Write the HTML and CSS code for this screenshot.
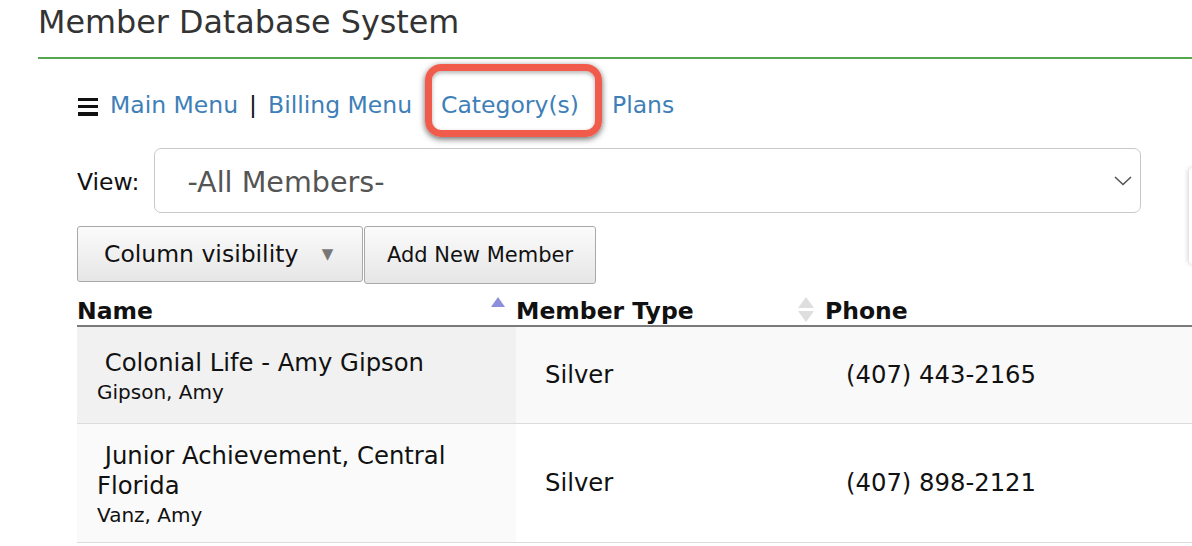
FILE: index.html
```html
<!DOCTYPE html>
<html>
<head>
<meta charset="utf-8">
<title>Member Database System</title>
<link rel="stylesheet" href="styles.css">
</head>
<body>
<header class="page-header">
  <h1 class="title">Member Database System</h1>
</header>
<main class="content">
  <nav class="nav">
    <span class="burger"><i></i><i></i><i></i></span>
    <a class="nav-link" href="#">Main Menu</a>
    <span class="sep">|</span>
    <a class="nav-link" href="#">Billing Menu</a>
    <a class="nav-link nav-highlight" href="#">Category(s)</a>
    <a class="nav-link" href="#">Plans</a>
  </nav>

  <div class="view-row">
    <span class="view-label">View:</span>
    <div class="select">
      <span class="select-text">-All Members-</span>
      <svg class="chevron" width="18" height="10" viewBox="0 0 18 10"><path d="M1 1 L9 8.5 L17 1" fill="none" stroke="#555" stroke-width="1.6"/></svg>
    </div>
  </div>

  <div class="btn-row">
    <button class="btn btn-colvis">Column visibility <span class="caret">▼</span></button>
    <button class="btn btn-add">Add New Member</button>
  </div>

  <table class="members">
    <thead>
      <tr>
        <th class="col-name sort-asc">Name</th>
        <th class="col-type sort-both">Member Type</th>
        <th class="col-phone">Phone</th>
      </tr>
    </thead>
    <tbody>
      <tr class="odd">
        <td class="cell-name"><div class="org">&nbsp;Colonial Life - Amy Gipson</div><div class="person">Gipson, Amy</div></td>
        <td class="cell-type">Silver</td>
        <td class="cell-phone">(407) 443-2165</td>
      </tr>
      <tr class="even">
        <td class="cell-name"><div class="org">&nbsp;Junior Achievement, Central Florida</div><div class="person">Vanz, Amy</div></td>
        <td class="cell-type">Silver</td>
        <td class="cell-phone">(407) 898-2121</td>
      </tr>
    </tbody>
  </table>
</main>
<div class="edge-panel"></div>
</body>
</html>
```
FILE: styles.css
```css
html, body {
  margin: 0;
  padding: 0;
  overflow: hidden;
  background: #fff;
}
body {
  font-family: "DejaVu Sans", Verdana, sans-serif;
  color: #111;
  width: 1192px;
  height: 546px;
  position: relative;
}
.page-header {
  margin-left: 38px;
  padding-top: 3px;
  padding-bottom: 16px;
  border-bottom: 2px solid #55a84e;
}
.title {
  margin: 0;
  font-size: 31.8px;
  line-height: 38px;
  font-weight: normal;
  color: #333;
}
.content {
  margin-left: 77px;
}
.nav {
  display: flex;
  align-items: center;
  margin-top: 32px;
  height: 28px;
  font-size: 23.5px;
  line-height: 28px;
}
.burger {
  display: flex;
  flex-direction: column;
  justify-content: space-between;
  width: 20px;
  height: 18px;
  margin-left: 1px;
  margin-right: 12px;
  margin-top: 3px;
}
.burger i {
  display: block;
  height: 3.5px;
  background: #111;
}
.nav-link {
  color: #3f7fb8;
  text-decoration: none;
  margin-right: 29px;
}
.nav-link:first-of-type {
  margin-right: 0;
}
.sep {
  margin: 0 11px 0 11px;
  color: #111;
}
.nav-highlight {
  position: relative;
  margin-right: 33px;
}
.nav-highlight::after {
  content: "";
  position: absolute;
  left: -16px;
  right: -23px;
  top: -27px;
  bottom: -18px;
  border: 7px solid #f05b4b;
  border-radius: 16px;
  box-shadow: 0 2px 6px rgba(0, 0, 0, 0.6), inset 0 2px 4px rgba(0, 0, 0, 0.3);
}
.view-row {
  display: flex;
  align-items: center;
  margin-top: 29px;
}
.view-label {
  font-size: 23.5px;
  margin-right: 15px;
  margin-top: 2px;
}
.select {
  display: flex;
  align-items: center;
  justify-content: space-between;
  width: 987px;
  height: 65px;
  box-sizing: border-box;
  border: 1.5px solid #c9c9c9;
  border-radius: 7px;
  padding: 0 8px 0 32px;
}
.select-text {
  font-size: 28.6px;
  color: #555;
  margin-top: 3px;
}
.chevron {
  display: block;
}
.btn-row {
  display: flex;
  margin-top: 13px;
  height: 57px;
}
.btn {
  font-family: "DejaVu Sans", Verdana, sans-serif;
  color: #111;
  background: linear-gradient(#fbfbfb, #e6e6e6);
  border: 1px solid #a9a9a9;
  border-radius: 3px;
  box-sizing: border-box;
  margin: 0;
}
.btn-colvis {
  font-size: 23.5px;
  width: 286px;
  height: 56px;
  padding: 0 0 0 26px;
  text-align: left;
  margin-right: 1px;
}
.caret {
  font-size: 15px;
  color: #777;
  margin-left: 16px;
  vertical-align: 3px;
}
.btn-add {
  font-size: 21px;
  width: 232px;
  height: 58px;
  padding: 0;
}
.members {
  width: 1115px;
  border-collapse: collapse;
  margin-top: 14px;
  table-layout: fixed;
}
.members th {
  font-size: 23.5px;
  font-weight: bold;
  text-align: left;
  line-height: 28px;
  padding: 0;
  position: relative;
  border-bottom: 2px solid #7a7a7a;
}
.col-name { width: 439px; }
.col-type { width: 309px; }
.sort-asc::after {
  content: "";
  position: absolute;
  right: 11px;
  top: 0;
  border-left: 7.5px solid transparent;
  border-right: 7.5px solid transparent;
  border-bottom: 10px solid #8c90dc;
}
.sort-both::before,
.sort-both::after {
  content: "";
  position: absolute;
  right: 11px;
  border-left: 8px solid transparent;
  border-right: 8px solid transparent;
}
.sort-both::before {
  top: 0;
  border-bottom: 11px solid #dedede;
}
.sort-both::after {
  top: 14px;
  border-top: 11px solid #dedede;
}
.members td {
  font-size: 24.3px;
  vertical-align: middle;
  border-bottom: 1px solid #dcdcdc;
}
.members tr.odd { height: 97px; }
.members tr.odd td { background: #f9f9f9; }
.members tr.odd td.cell-name { background: #f1f1f1; }
.members tr.even td { background: #fff; }
.members tr.even td.cell-name { background: #fafafa; }
.cell-name {
  padding: 17px 20px 13px 20px;
}
.org {
  line-height: 30px;
}
.person {
  font-size: 20px;
  line-height: 28px;
}
.cell-type {
  padding-left: 29px;
}
.cell-phone {
  padding-left: 21px;
}
.edge-panel {
  position: absolute;
  left: 1189px;
  top: 168px;
  width: 40px;
  height: 96px;
  background: #fff;
  border-radius: 4px;
  box-shadow: -1px 0 5px rgba(0, 0, 0, 0.18);
}
```
